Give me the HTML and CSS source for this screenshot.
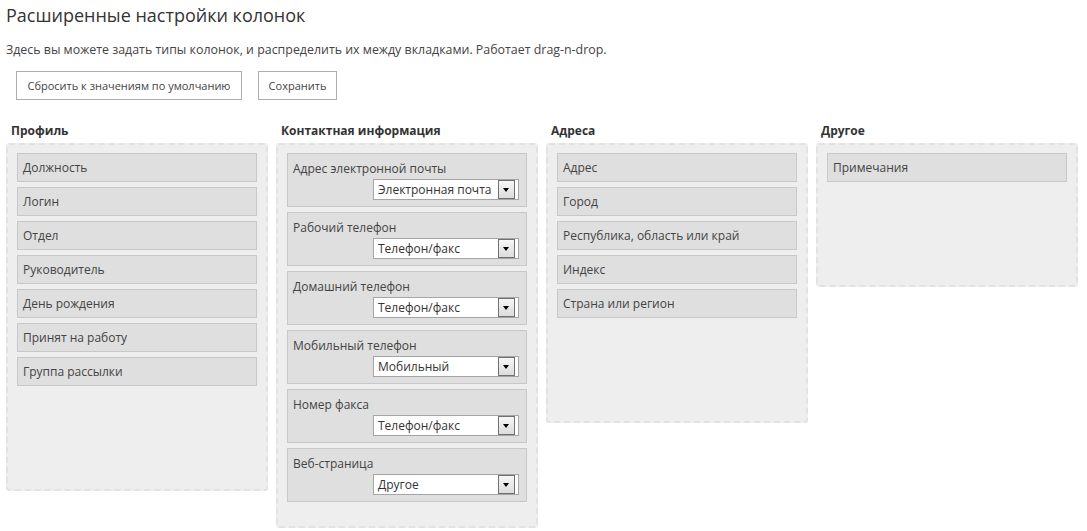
FILE: index.html
```html
<!DOCTYPE html>
<html lang="ru">
<head>
<meta charset="utf-8">
<title>Расширенные настройки колонок</title>
<link rel="stylesheet" href="styles.css">
</head>
<body>
<h1 class="title">Расширенные настройки колонок</h1>
<p class="desc">Здесь вы можете задать типы колонок, и распределить их между вкладками. Работает drag-n-drop.</p>
<div class="actions">
  <button class="btn btn-reset">Сбросить к значениям по умолчанию</button>
  <button class="btn btn-save">Сохранить</button>
</div>
<div class="columns">
  <div class="col">
    <div class="col-title">Профиль</div>
    <div class="panel">
      <div class="item">Должность</div>
      <div class="item">Логин</div>
      <div class="item">Отдел</div>
      <div class="item">Руководитель</div>
      <div class="item">День рождения</div>
      <div class="item">Принят на работу</div>
      <div class="item">Группа рассылки</div>
    </div>
  </div>
  <div class="col">
    <div class="col-title">Контактная информация</div>
    <div class="panel panel-typed">
      <div class="item item-typed"><div class="item-label">Адрес электронной почты</div><div class="sel"><span class="sel-text">Электронная почта</span><span class="sel-btn"></span></div></div>
      <div class="item item-typed"><div class="item-label">Рабочий телефон</div><div class="sel"><span class="sel-text">Телефон/факс</span><span class="sel-btn"></span></div></div>
      <div class="item item-typed"><div class="item-label">Домашний телефон</div><div class="sel"><span class="sel-text">Телефон/факс</span><span class="sel-btn"></span></div></div>
      <div class="item item-typed"><div class="item-label">Мобильный телефон</div><div class="sel"><span class="sel-text">Мобильный</span><span class="sel-btn"></span></div></div>
      <div class="item item-typed"><div class="item-label">Номер факса</div><div class="sel"><span class="sel-text">Телефон/факс</span><span class="sel-btn"></span></div></div>
      <div class="item item-typed"><div class="item-label">Веб-страница</div><div class="sel"><span class="sel-text">Другое</span><span class="sel-btn"></span></div></div>
    </div>
  </div>
  <div class="col">
    <div class="col-title">Адреса</div>
    <div class="panel">
      <div class="item">Адрес</div>
      <div class="item">Город</div>
      <div class="item">Республика, область или край</div>
      <div class="item">Индекс</div>
      <div class="item">Страна или регион</div>
    </div>
  </div>
  <div class="col">
    <div class="col-title">Другое</div>
    <div class="panel">
      <div class="item">Примечания</div>
    </div>
  </div>
</div>
</body>
</html>
```
FILE: styles.css
```css
html, body {
  margin: 0;
  padding: 0;
  background: #fff;
}
body {
  padding: 0 6px;
  font-family: "Open Sans", "Noto Sans", "DejaVu Sans", sans-serif;
  font-size: 12px;
  color: #444;
}
.title {
  margin: 0;
  padding-top: 2px;
  font-size: 18px;
  font-weight: normal;
  line-height: 26px;
  color: #333;
}
.desc {
  margin: 13px 0 0 0;
  font-size: 12.4px;
  line-height: 18px;
  color: #444;
}
.actions {
  display: flex;
  gap: 16px;
  margin: 12px 0 0 10px;
}
.btn {
  height: 29px;
  padding: 0 8px;
  border: 1px solid #adadad;
  background: #fff;
  font-family: inherit;
  font-size: 11px;
  color: #444;
  cursor: pointer;
}
.btn-reset { width: 226px; }
.btn-save { width: 79px; }
.columns {
  display: flex;
  align-items: flex-start;
  gap: 8px;
  margin-top: 22px;
}
.col {
  width: 262px;
}
.col-title {
  padding-left: 5px;
  font-weight: bold;
  line-height: 18px;
  color: #333;
  margin-bottom: 3px;
}
.panel {
  display: flex;
  flex-direction: column;
  gap: 5px;
  padding: 8px 9px 103px 9px;
  background: #eee;
  border: 2px dashed #e2e2e2;
  border-radius: 3px;
}
.panel-typed {
  padding-bottom: 24px;
}
.item {
  height: 29px;
  box-sizing: border-box;
  padding-left: 5px;
  border: 1px solid #c8c8c8;
  background: #dfdfdf;
  line-height: 27px;
  color: #444;
  white-space: nowrap;
}
.item-typed {
  height: 54px;
  display: flex;
  flex-direction: column;
  align-items: flex-end;
  padding-top: 4px;
  padding-right: 7px;
}
.item-label {
  align-self: flex-start;
  line-height: 21px;
}
.sel {
  width: 146px;
  height: 21px;
  box-sizing: border-box;
  display: flex;
  align-items: center;
  border: 1px solid #a5a5a5;
  background: #fff;
}
.sel-text {
  flex: 1;
  padding-left: 4px;
  line-height: 19px;
  color: #333;
  overflow: hidden;
}
.sel-btn {
  position: relative;
  width: 17px;
  height: 19px;
  box-sizing: border-box;
  margin-right: 3px;
  border: 1px solid #707070;
  background: linear-gradient(#f7f7f7, #dcdcdc);
}
.sel-btn::after {
  content: "";
  position: absolute;
  left: 4px;
  top: 7px;
  border-left: 3.5px solid transparent;
  border-right: 3.5px solid transparent;
  border-top: 4px solid #000;
}
```
